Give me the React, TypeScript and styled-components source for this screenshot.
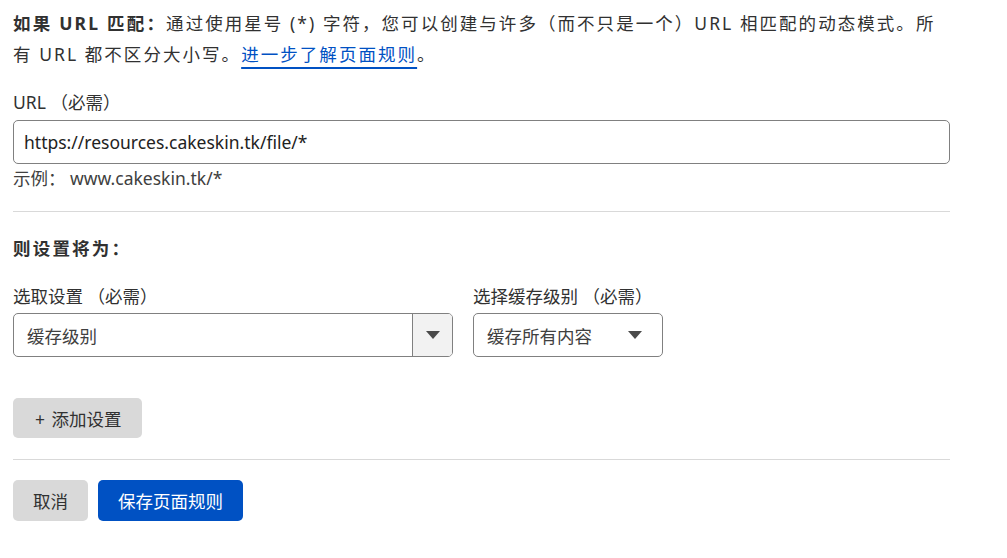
import styled, { createGlobalStyle } from "styled-components";

const Global = createGlobalStyle`
  body {
    margin: 0;
    background: #fff;
    font-family: "Segoe UI", "Noto Sans", "Noto Sans CJK SC", sans-serif;
    color: #313131;
  }
`;

const Page = styled.div`
  width: 937px;
  padding: 8px 13px 0;
  font-size: 17.5px;
`;

const Intro = styled.p`
  margin: 0;
  line-height: 31px;
  letter-spacing: 2.05px;
`;

const Strong = styled.strong`
  font-weight: 700;
  letter-spacing: 2.2px;
`;

const DocLink = styled.a`
  color: #0051c3;
  text-decoration: underline;
  text-decoration-thickness: 2px;
  text-underline-offset: 6px;
`;

const Label = styled.div<{ $top?: number }>`
  margin-top: ${(p) => p.$top ?? 24}px;
  line-height: 24px;
  white-space: pre;
`;

const TextInput = styled.div`
  margin-top: 6px;
  box-sizing: border-box;
  height: 44px;
  border: 1px solid #808080;
  border-radius: 5px;
  padding: 0 10px;
  display: flex;
  align-items: center;
  color: #222;
`;

const Hint = styled.div`
  margin-top: 2px;
  line-height: 24px;
  white-space: pre;
  color: #404040;
`;

const Divider = styled.hr<{ $top: number }>`
  margin: ${(p) => p.$top}px 0 0;
  border: 0;
  border-top: 1px solid #d9d9d9;
`;

const Heading = styled.div`
  margin-top: 24px;
  line-height: 24px;
  font-weight: 700;
  letter-spacing: 2.2px;
`;

const Fields = styled.div`
  display: flex;
  gap: 20px;
`;

const Field = styled.div<{ $w: number }>`
  width: ${(p) => p.$w}px;
`;

const Select = styled.div`
  margin-top: 5px;
  box-sizing: border-box;
  height: 44px;
  border: 1px solid #808080;
  border-radius: 5px;
  display: flex;
  align-items: stretch;
  overflow: hidden;
`;

const SelectValue = styled.div`
  flex: 1;
  display: flex;
  align-items: center;
  padding-left: 13px;
  color: #404040;
`;

const ArrowBox = styled.div<{ $split?: boolean }>`
  width: ${(p) => (p.$split ? 39 : 38)}px;
  display: flex;
  align-items: center;
  justify-content: center;
  background: ${(p) => (p.$split ? "#f2f2f2" : "transparent")};
  border-left: ${(p) => (p.$split ? "1px solid #808080" : "none")};
  padding-right: ${(p) => (p.$split ? 0 : 8)}px;
`;

const Caret = () => (
  <svg width="14" height="8" viewBox="0 0 14 8">
    <path d="M0 0h14L7 8z" fill="#4a4a4a" />
  </svg>
);

const Button = styled.button<{ $primary?: boolean }>`
  height: 41px;
  padding: 0 20px;
  border: 0;
  border-radius: 5px;
  font: inherit;
  font-size: 17.5px;
  background: ${(p) => (p.$primary ? "#0051c3" : "#d9d9d9")};
  color: ${(p) => (p.$primary ? "#fff" : "#313131")};
`;

const AddButton = styled(Button)`
  height: 40px;
  padding: 0 20px 0 22px;
  word-spacing: 2px;
`;

const AddRow = styled.div`
  margin-top: 41px;
`;

const Actions = styled.div`
  margin-top: 20px;
  display: flex;
  gap: 10px;
`;

export default function App() {
  return (
    <>
      <Global />
      <Page>
        <Intro>
          <Strong>如果 URL 匹配：</Strong>通过使用星号 (*) 字符，您可以创建与许多（而不只是一个）URL 相匹配的动态模式。所有 URL 都不区分大小写。
          <DocLink href="#">进一步了解页面规则</DocLink>。
        </Intro>
        <Label $top={20}>URL （必需）</Label>
        <TextInput>https://resources.cakeskin.tk/file/*</TextInput>
        <Hint>示例： www.cakeskin.tk/*</Hint>
        <Divider $top={21} />
        <Heading>则设置将为：</Heading>
        <Fields>
          <Field $w={440}>
            <Label>选取设置 （必需）</Label>
            <Select>
              <SelectValue>缓存级别</SelectValue>
              <ArrowBox $split>
                <Caret />
              </ArrowBox>
            </Select>
          </Field>
          <Field $w={190}>
            <Label>选择缓存级别 （必需）</Label>
            <Select>
              <SelectValue>缓存所有内容</SelectValue>
              <ArrowBox>
                <Caret />
              </ArrowBox>
            </Select>
          </Field>
        </Fields>
        <AddRow>
          <AddButton>+ 添加设置</AddButton>
        </AddRow>
        <Divider $top={21} />
        <Actions>
          <Button>取消</Button>
          <Button $primary>保存页面规则</Button>
        </Actions>
      </Page>
    </>
  );
}
